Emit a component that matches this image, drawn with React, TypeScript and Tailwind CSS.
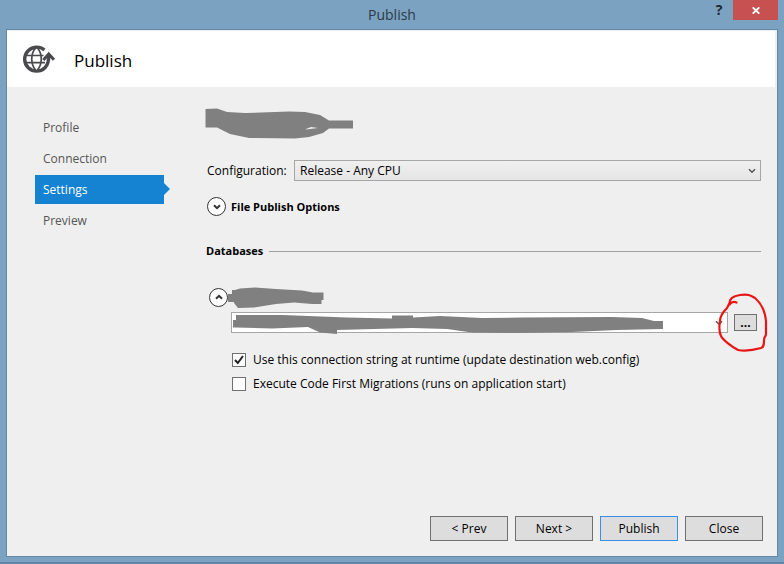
import { useState } from 'react'
import clsx from 'clsx'

const steps = ['Profile', 'Connection', 'Settings', 'Preview']

function Chevron({ up = false, className }: { up?: boolean; className?: string }) {
  return (
    <svg viewBox="0 0 8 6" className={clsx('h-[6px] w-[8px]', className)} fill="none" stroke="currentColor" aria-hidden="true">
      <path d={up ? 'M1 4.8 4 1.8 7 4.8' : 'M1 1.2 4 4.2 7 1.2'} />
    </svg>
  )
}

function PublishIcon() {
  return (
    <svg viewBox="0 0 34 30" className="h-[30px] w-[34px]" fill="none" stroke="#4a4a4c" aria-hidden="true">
      <path d="M22.4 6A12 12 0 1 0 23 23.800C25.800 21 27 17 26.800 10" strokeWidth="3.400" />
      <path d="M13.500 4C8.500 10 8.500 20 13.500 26M15.500 4C20.500 10 20.500 20 15.500 26" strokeWidth="1.700" />
      <path d="M4 11.500H21.500M4 18.700H23" strokeWidth="1.700" />
      <path d="M21.400 16 26.700 10 32 15.800" strokeWidth="3" />
    </svg>
  )
}

function ExpandButton({ label, up = false }: { label: string; up?: boolean }) {
  return (
    <button
      type="button"
      aria-label={label}
      aria-expanded={up}
      className="flex h-[19px] w-[19px] shrink-0 items-center justify-center rounded-full border border-[#333] bg-white text-[#333]"
    >
      <Chevron up={up} className="stroke-2" />
    </button>
  )
}

function DialogButton({ children, primary = false }: { children: string; primary?: boolean }) {
  return (
    <button
      type="button"
      className={clsx(
        'h-[25px] w-[78px] border bg-[#dddddd]',
        primary ? 'border-[#3c8ee5]' : 'border-[#707070]'
      )}
    >
      {children}
    </button>
  )
}

function CheckOption({ label, initial }: { label: string; initial: boolean }) {
  const [checked, setChecked] = useState(initial)

  return (
    <label className="flex h-[24px] items-center gap-[7px]">
      <span className="grid h-[14px] w-[14px]">
        <input
          type="checkbox"
          checked={checked}
          onChange={e => setChecked(e.target.checked)}
          className="col-start-1 row-start-1 h-[14px] w-[14px] appearance-none border border-[#707070] bg-white"
        />
        {checked && (
          <svg viewBox="0 0 14 14" className="pointer-events-none col-start-1 row-start-1" fill="none" stroke="#212121" strokeWidth="2" aria-hidden="true">
            <path d="M3 7 5.8 10 11 3" />
          </svg>
        )}
      </span>
      {label}
    </label>
  )
}

export default function App() {
  const [step, setStep] = useState('Settings')

  return (
    <div className="flex min-h-screen flex-col border-b-2 border-[#5f84a5] bg-[#7ba2c1] px-[6px] pb-[5px] font-['Open_Sans','Noto_Sans',sans-serif] text-[12px] leading-[16px] text-black">
      <header className="grid h-[29px] grid-cols-[1fr_auto_1fr]">
        <h1 className="col-start-2 pt-[5px] text-[14px] leading-[20px] text-[#2b3a47]">Publish</h1>
        <div className="flex items-start justify-end gap-[3px]">
          <button type="button" aria-label="Help" className="h-[20px] w-[22px] text-[14px] font-bold text-[#1c2730]">
            ?
          </button>
          <button type="button" aria-label="Close window" className="flex h-[20px] w-[45px] items-center justify-center bg-[#c75050]">
            <svg viewBox="0 0 8 7" className="h-[7px] w-[8px]" stroke="#fff" strokeWidth="1.8" aria-hidden="true">
              <path d="M.7.3 7.3 6.7M7.3.3.7 6.7" />
            </svg>
          </button>
        </div>
      </header>

      <div className="flex flex-1 flex-col border border-[#6487a5] bg-[#efefef]">
        <div className="mr-[2px] flex h-[57px] items-center gap-[18px] border-t border-[#efefef] bg-white pl-[15px]">
          <PublishIcon />
          <h2 className="pt-[3px] text-[17px] leading-[24px]">Publish</h2>
        </div>

        <div className="flex flex-1">
          <nav className="ml-[28px] flex w-[129px] flex-col gap-[2px] pt-[26px]">
            {steps.map(name => (
              <button
                key={name}
                type="button"
                onClick={() => setStep(name)}
                className={clsx(
                  'relative h-[29px] px-[8px] text-left',
                  step === name ? 'bg-[#1583d1] text-white' : 'text-[#555]'
                )}
              >
                {name}
                {step === name && (
                  <svg viewBox="0 0 6 12" className="absolute top-[8px] left-full h-[12px] w-[6px]" fill="#1583d1" aria-hidden="true">
                    <path d="M0 0 6 6 0 12Z" />
                  </svg>
                )}
              </button>
            ))}
          </nav>

          <main className="ml-[41px] flex-1 pt-[20px] pr-[16px]">
            <svg viewBox="0 0 150 34" className="h-[34px] w-[150px]" fill="#808080" aria-label="Profile name hidden" role="img">
              <path
                fillRule="evenodd"
                d="M.5 2 12 1.5 22 5 40 6 84 4.5 100 5 115 8 124 13.500H148V21.500H124L118 26 104 30 90 31.500 44 31 25 27 12 20.500H.5ZM106 20 101 22V22.500L113 21Z"
              />
            </svg>

            <div className="mt-[19px] flex items-center">
              <label htmlFor="configuration" className="w-[89px] pl-[2px]">Configuration:</label>
              <div className="grid flex-1 items-center">
                <select
                  id="configuration"
                  className="col-start-1 row-start-1 h-[21px] appearance-none border border-[#a6a6a6] bg-linear-to-b from-[#f0f0f0] to-[#e5e5e5] pl-[5px]"
                >
                  <option>Release - Any CPU</option>
                </select>
                <Chevron className="pointer-events-none col-start-1 row-start-1 mr-[5px] justify-self-end stroke-[1.5] text-[#555]" />
              </div>
            </div>

            <div className="mt-[16px] flex items-center gap-[5px] pl-[2px]">
              <ExpandButton label="Expand File Publish Options" />
              <h3 className="text-[11px] font-bold">File Publish Options</h3>
            </div>

            <div className="mt-[27px] flex items-center gap-[6px] pl-[1px]">
              <h3 className="text-[11px] font-bold">Databases</h3>
              <div className="h-px flex-1 bg-[#a0a0a0]" />
            </div>

            <div className="mt-[27px] flex items-center pl-[4px]">
              <ExpandButton label="Collapse database" up />
              <svg viewBox="0 0 98 22" className="h-[22px] w-[98px]" fill="#808080" aria-label="Database name hidden" role="img">
                <path d="M0 8H4V4H7L12 2.500 27 1.500 48 3 74 4.500 85 6.500H95.500V14H93.500V18H84L66 16.500 48 18 26 21.500 10 22 6 17V16H0Z" />
              </svg>
            </div>

            <div className="relative mt-[4px] flex items-center gap-[6px] pr-[4px] pl-[26px]">
              <div className="grid flex-1 items-center">
                <select
                  aria-label="Connection string"
                  className="col-start-1 row-start-1 h-[21px] appearance-none border border-[#a6a6a6] bg-white"
                />
                <Chevron className="pointer-events-none col-start-1 row-start-1 mr-[5px] justify-self-end stroke-[1.5] text-[#555]" />
              </div>
              <button type="button" aria-label="Browse connection" className="h-[17px] w-[23px] border border-[#707070] bg-[#dddddd] leading-[14px] font-bold">
                ...
              </button>
              <svg viewBox="0 0 434 22" className="pointer-events-none absolute top-0 left-[27px] h-[22px] w-[434px]" fill="#808080" aria-hidden="true">
                <path d="M1 8H4V3H50L115 5.500 160 6.500V3.500H181V5.500L208 4 250 6 290 5.500 380 5 410 6 422 9H431V17L385 18 340 20 285 21 240 20.500 215 17 180 16 105 18V22L88 20.500 76 15 40 16.500 4 15.500H1Z" />
              </svg>
              {/* hand-drawn ring around the browse button */}
              <svg viewBox="0 0 50 60" className="pointer-events-none absolute -top-[20px] -right-[7px] h-[60px] w-[50px]" fill="none" stroke="#e81515" strokeWidth="2.200" strokeLinecap="round" strokeLinejoin="round" aria-hidden="true">
                <path d="M18.500 10.500C16 9.500 13 10.500 11.500 12.500 11 7 14 4 22 3 30 2 32 3 37 6 43 11 47 19 48 29V42C48 45 46 44 46 48 46 52 46 55 43 56 36 58 26 59 20 58 14 55 5 48 3 44 1 40 1 35 2 29 2 23 6 19 9 16L12 10" />
              </svg>
            </div>

            <div className="mt-[15px] pl-[27px]">
              <CheckOption label="Use this connection string at runtime (update destination web.config)" initial />
              <CheckOption label="Execute Code First Migrations (runs on application start)" initial={false} />
            </div>
          </main>
        </div>

        <footer className="flex justify-end gap-[7px] pr-[14px] pb-[15px]">
          <DialogButton>{'< Prev'}</DialogButton>
          <DialogButton>{'Next >'}</DialogButton>
          <DialogButton primary>Publish</DialogButton>
          <DialogButton>Close</DialogButton>
        </footer>
      </div>
    </div>
  )
}
